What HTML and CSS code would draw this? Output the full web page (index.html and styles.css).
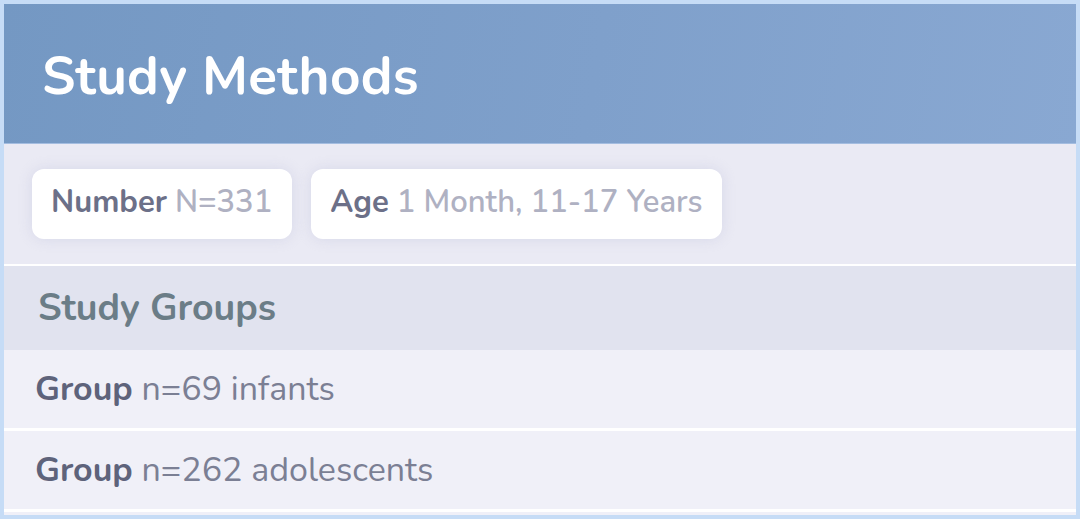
FILE: index.html
```html
<!DOCTYPE html>
<html>
<head>
<meta charset="utf-8">
<link rel="stylesheet" href="styles.css">
</head>
<body>
<div class="card">
  <header class="head">
    <h1 class="title">Study Methods</h1>
  </header>
  <section class="chips">
    <div class="chip"><p class="text"><span class="label">Number</span> <span class="value">N=331</span></p></div>
    <div class="chip"><p class="text"><span class="label">Age</span> <span class="value">1 Month, 11-17 Years</span></p></div>
  </section>
  <section class="groups">
    <div class="groups-head">Study Groups</div>
    <div class="row"><p class="text"><span class="label">Group</span> <span class="val">n=69 infants</span></p></div>
    <div class="row"><p class="text"><span class="label">Group</span> <span class="val">n=262 adolescents</span></p></div>
  </section>
</div>
</body>
</html>
```
FILE: styles.css
```css
html, body {
  margin: 0;
  padding: 0;
}
body {
  background: #c6dcf6;
  font-family: "Nunito", "Lato", "Open Sans", sans-serif;
  width: 1080px;
  height: 519px;
  overflow: hidden;
}
.card {
  margin: 4px;
  height: 511px;
  background: #f0f0f8;
  display: flex;
  flex-direction: column;
}
.head {
  height: 139px;
  flex: none;
  background: linear-gradient(100deg, #7498c3 0%, #7fa0cb 55%, #89a8d2 100%);
  border-bottom: 1px solid #a4bde0;
  display: flex;
  align-items: center;
  padding-left: 38px;
}
.title {
  margin: 0;
  color: #ffffff;
  font-weight: 700;
  font-size: 53px;
  letter-spacing: 0.3px;
  padding-top: 5px;
}
.text {
  margin: 0;
  white-space: pre;
}
.chips {
  height: 122px;
  flex: none;
  background: #eaeaf4;
  display: flex;
  align-items: flex-start;
  gap: 19px;
  padding: 25px 28px 0;
  box-sizing: border-box;
  border-bottom: 2px solid #ffffff;
}
.chip {
  height: 70px;
  background: #ffffff;
  border-radius: 12px;
  box-shadow: 0 0 14px rgba(190, 192, 220, 0.45);
  display: flex;
  align-items: center;
  padding: 0 20px 4px 19px;
  box-sizing: border-box;
  font-size: 31px;
}
.chip .label {
  font-weight: 700;
  color: #6c7088;
}
.chip .value {
  color: #afb1c2;
  font-weight: 600;
}
.groups {
  display: flex;
  flex-direction: column;
}
.groups-head {
  height: 84px;
  background: #e1e3ef;
  color: #6b7d87;
  font-weight: 700;
  font-size: 37.5px;
  display: flex;
  align-items: center;
  padding-left: 34px;
  padding-bottom: 2px;
  box-sizing: border-box;
}
.row {
  height: 81px;
  background: #f0f0f8;
  border-bottom: 3px solid #ffffff;
  box-sizing: border-box;
  display: flex;
  align-items: center;
  padding-left: 31px;
  font-size: 34px;
}
.row .label {
  font-weight: 700;
  color: #5e637b;
}
.row .val {
  color: #7b7f94;
}
```
